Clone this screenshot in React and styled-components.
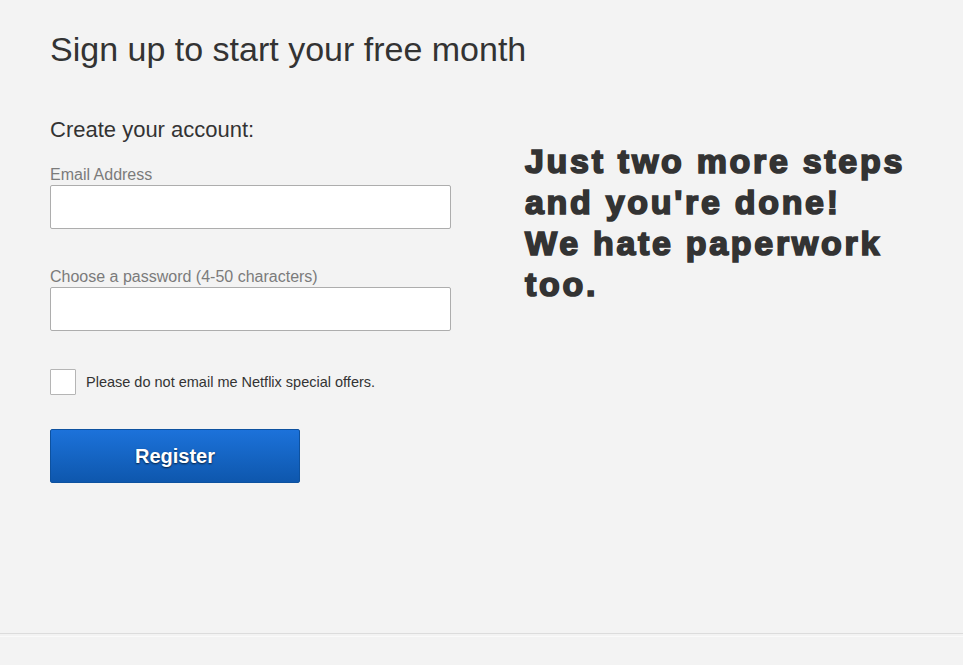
import React, { useState } from "react";
import styled, { createGlobalStyle } from "styled-components";

function SignupForm() {
  const [email, setEmail] = useState("");
  const [password, setPassword] = useState("");
  const [noOffers, setNoOffers] = useState(false);

  return (
    <Form onSubmit={(e) => e.preventDefault()}>
      <SubTitle>Create your account:</SubTitle>
      <Field>
        <Label htmlFor="email">Email Address</Label>
        <TextInput
          id="email"
          type="email"
          value={email}
          onChange={(e) => setEmail(e.target.value)}
        />
      </Field>
      <Field $spaced>
        <Label htmlFor="password">Choose a password (4-50 characters)</Label>
        <TextInput
          id="password"
          type="password"
          value={password}
          onChange={(e) => setPassword(e.target.value)}
        />
      </Field>
      <CheckRow>
        <CheckBox
          type="checkbox"
          checked={noOffers}
          onChange={(e) => setNoOffers(e.target.checked)}
        />
        <CheckText>Please do not email me Netflix special offers.</CheckText>
      </CheckRow>
      <RegisterButton type="submit">Register</RegisterButton>
    </Form>
  );
}

function App() {
  return (
    <>
      <GlobalStyle />
      <Main>
        <Title>Sign up to start your free month</Title>
        <Columns>
          <SignupForm />
          <Aside>
            Just two more steps
            <br />
            and you're done!
            <br />
            We hate paperwork
            <br />
            too.
          </Aside>
        </Columns>
      </Main>
      <Footer />
    </>
  );
}

export default App;

const GlobalStyle = createGlobalStyle`
  html, body {
    margin: 0;
    background: #f3f3f3;
    font-family: "Liberation Sans", Arial, sans-serif;
    color: #333;
  }
`;

const Main = styled.main`
  box-sizing: border-box;
  height: 634px;
  padding: 29px 50px 0;
  border-bottom: 1px solid #dcdcdc;
`;

const Title = styled.h1`
  margin: 0;
  font-size: 34px;
  line-height: 40px;
  font-weight: 400;
  color: #333;
`;

const Columns = styled.div`
  display: flex;
  align-items: flex-start;
  gap: 74px;
  margin-top: 48px;
`;

const Form = styled.form`
  display: flex;
  flex-direction: column;
  width: 401px;
`;

const SubTitle = styled.h2`
  margin: 0;
  font-size: 22px;
  line-height: 26px;
  font-weight: 400;
  color: #333;
`;

const Field = styled.div`
  display: flex;
  flex-direction: column;
  gap: 1px;
  margin-top: ${(p) => (p.$spaced ? "39px" : "23px")};
`;

const Label = styled.label`
  font-size: 16px;
  line-height: 18px;
  color: #7b7b7b;
`;

const TextInput = styled.input`
  box-sizing: border-box;
  width: 401px;
  height: 44px;
  margin: 0;
  padding: 0 10px;
  border: 1px solid #adadad;
  border-radius: 2px;
  background: #fff;
  font-family: inherit;
  font-size: 16px;
  outline: none;
`;

const CheckRow = styled.label`
  display: flex;
  align-items: center;
  gap: 10px;
  margin-top: 38px;
`;

const CheckBox = styled.input`
  appearance: none;
  box-sizing: border-box;
  width: 26px;
  height: 26px;
  margin: 0;
  border: 1px solid #b5b5b5;
  border-radius: 1px;
  background: #fff;
  &:checked {
    box-shadow: inset 0 0 0 5px #fff, inset 0 0 0 12px #1a66c6;
  }
`;

const CheckText = styled.span`
  font-size: 14.5px;
  color: #333;
`;

const RegisterButton = styled.button`
  box-sizing: border-box;
  width: 250px;
  height: 54px;
  margin-top: 34px;
  border: 1px solid #0d519f;
  border-radius: 2px;
  background: linear-gradient(#1c72da, #0e57ad);
  color: #fff;
  font-family: inherit;
  font-size: 20px;
  font-weight: 700;
  text-shadow: 0 1px 2px rgba(0, 0, 0, 0.7);
  cursor: pointer;
`;

const Aside = styled.p`
  margin: 0;
  padding-top: 24px;
  font-size: 34px;
  line-height: 41px;
  font-weight: 700;
  letter-spacing: 2.7px;
  color: #333;
  -webkit-text-stroke: 1.7px #333;
`;

const Footer = styled.footer`
  margin-top: 2px;
  height: 29px;
  border-top: 1px solid #fafafa;
`;
